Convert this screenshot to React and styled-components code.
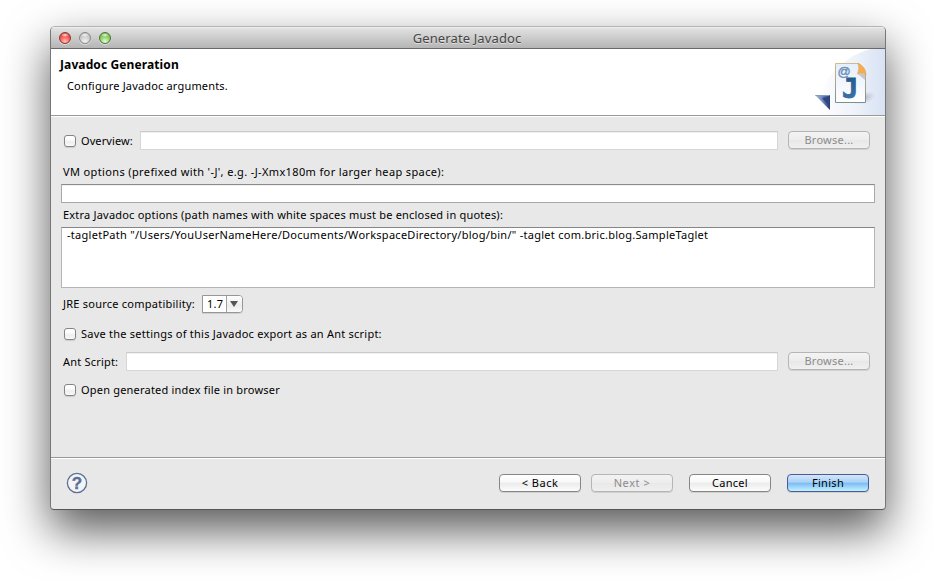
import React from 'react';
import styled, { createGlobalStyle, css } from 'styled-components';

const GlobalStyle = createGlobalStyle`
  * { box-sizing: border-box; }
  html, body { margin: 0; height: 100%; overflow: hidden; background: #fff; }
  body { font-family: "Noto Sans", "Open Sans", sans-serif; font-size: 11px; color: #000; }
`;

const Desktop = styled.div`
  width: 934px;
  height: 581px;
  padding: 26px 0 0 50px;
  overflow: hidden;
`;

const Window = styled.div`
  width: 836px;
  height: 484px;
  display: flex;
  flex-direction: column;
  overflow: hidden;
  border: 1px solid #777;
  border-top-color: #b4b4b4;
  border-bottom-color: #555;
  border-radius: 5px 5px 4px 4px;
  background: #e8e8e8;
  box-shadow: 0 20px 46px rgba(0, 0, 0, 0.66);
`;

const TitleBar = styled.header`
  height: 22px;
  flex: none;
  display: grid;
  grid-template-columns: 100px 1fr 100px;
  align-items: center;
  border-top: 1px solid #ededed;
  border-bottom: 1px solid #696969;
  background: linear-gradient(#e2e2e2, #b5b5b5);
`;

const Lights = styled.div`
  display: flex;
  gap: 8px;
  padding-left: 8px;
`;

const lightTones = {
  red: ['#8b3431', '#b83c38', '#fa5e57', '#ffc0b8'],
  gray: ['#888', '#b5b5b5', '#cfcfcf', '#f2f2f2'],
  green: ['#4d7438', '#64a43d', '#8fd168', '#e3ffd0'],
};

const Light = styled.span`
  width: 12px;
  height: 12px;
  border-radius: 50%;
  border: 1px solid ${p => lightTones[p.$tone][0]};
  background:
    radial-gradient(ellipse 4px 2px at 50% 20%, rgba(255, 255, 255, 0.85), transparent),
    radial-gradient(circle at 50% 85%, ${p => lightTones[p.$tone][3]}, ${p => lightTones[p.$tone][2]} 50%, ${p => lightTones[p.$tone][1]});
  box-shadow: 0 1px 0 rgba(255, 255, 255, 0.5);
`;

const Title = styled.h1`
  margin: 0;
  padding-right: 2px;
  text-align: center;
  font-size: 13px;
  line-height: 20px;
  font-weight: 400;
  letter-spacing: 0.12px;
  color: #454545;
  text-shadow: 0 1px 0 rgba(255, 255, 255, 0.5);
`;

const Banner = styled.section`
  height: 68px;
  flex: none;
  display: flex;
  justify-content: space-between;
  background: #fff;
  border-bottom: 1px solid #fff;
  box-shadow: inset 0 -1px 0 #999;
`;

const BannerText = styled.div`
  padding: 7px 0 0 9px;
`;

const Heading = styled.h2`
  margin: 0;
  font-size: 12px;
  line-height: 18px;
  letter-spacing: 0.11px;
`;

const Description = styled.p`
  margin: 4px 0 0 7px;
  line-height: 16px;
  letter-spacing: 0.17px;
`;

const BannerArt = styled.svg`
  display: block;
  width: 80px;
  height: 66px;
`;

const Form = styled.main`
  height: 340px;
  flex: none;
  padding: 14px 10px 0;
`;

const Row = styled.div`
  display: flex;
  align-items: center;
  height: ${p => p.$h || 19}px;
  margin-top: ${p => p.$top || 0}px;
  padding-left: ${p => p.$inset ?? 2}px;
`;

const Label = styled.span`
  flex: none;
  width: ${p => (p.$w ? `${p.$w}px` : 'auto')};
  line-height: 16px;
  white-space: pre;
  letter-spacing: ${p => p.$track || 0.25}px;
`;

const Check = styled.span`
  flex: none;
  width: 12px;
  height: 12px;
  margin: 0 5px 0 1px;
  border: 1px solid #858585;
  border-radius: 3px;
  background: linear-gradient(#fff 30%, #eee 60%, #fafafa);
  box-shadow: 0 1px 1px rgba(0, 0, 0, 0.12);
`;

const Field = styled.div`
  height: 19px;
  flex: none;
  width: ${p => (p.$w ? `${p.$w}px` : '100%')};
  background: #fff;
  border: 1px solid ${p => (p.$off ? '#d6d6d6' : '#a8a8a8')};
  border-top-color: ${p => (p.$off ? '#cacaca' : '#8c8c8c')};
  box-shadow: inset 0 1px 0 #f0f0f0;
`;

const TextArea = styled.div`
  width: 100%;
  height: 61px;
  padding: 0 5px;
  line-height: 14px;
  white-space: pre;
  letter-spacing: 0.275px;
  background: #fff;
  border: 1px solid #b5b5b5;
  border-top-color: #858585;
`;

const Button = styled.button`
  flex: none;
  align-self: flex-start;
  width: 82px;
  height: 18px;
  padding: 0;
  font: 11px/16px "Noto Sans", sans-serif;
  letter-spacing: ${p => p.$track || 0.4}px;
  text-align: center;
  color: #000;
  border: 1px solid #858585;
  border-radius: 4px;
  background: linear-gradient(#fff, #f8f8f8 45%, #ebebeb 50%, #fcfcfc);
  box-shadow: 0 1px 0 rgba(0, 0, 0, 0.1);
  ${p => p.disabled && css`
    color: #8c8c8c;
    border-color: #b5b5b5;
    background: linear-gradient(#f3f3f3, #ededed 50%, #e8e8e8 52%, #f0f0f0);
  `}
  ${p => p.$primary && css`
    border-color: #4b5a9c;
    background: linear-gradient(#d3e6fa, #a9d1f8 45%, #7dbcf6 52%, #c2f3ff);
  `}
`;

const Combo = styled.div`
  display: flex;
  width: 41px;
  height: 18px;
  border: 1px solid #969696;
  border-radius: 0 4px 4px 0;
  background: #fff;
  overflow: hidden;
  line-height: 16px;
  box-shadow: 0 1px 0 rgba(0, 0, 0, 0.1);
`;

const ComboValue = styled.span`
  width: 24px;
  padding-left: 4px;
  letter-spacing: 0.3px;
  border-right: 1px solid #a0a0a0;
`;

const ComboArrow = styled.span`
  flex: 1;
  display: grid;
  place-items: center;
  padding-right: 2px;
  background: linear-gradient(#fff, #ececec 60%, #fafafa);
  &::after {
    content: '';
    border: 4px solid transparent;
    border-top: 6px solid #555;
    border-bottom: 0;
  }
`;

const Footer = styled.footer`
  flex: 1;
  display: flex;
  align-items: flex-start;
  padding: 15px 16px 0 15px;
  border-top: 1px solid #999;
  box-shadow: inset 0 1px 0 #fff;
`;

const HelpIcon = styled.svg`
  width: 22px;
  height: 22px;
  margin-right: auto;
  margin-top: -1px;
`;

const Actions = styled.div`
  display: flex;
  padding-top: 1px;
`;

const ActionGap = styled.span`
  width: ${p => p.$w}px;
`;

function JavadocArt() {
  return (
    <BannerArt viewBox="0 0 80 66">
      <defs>
        <linearGradient id="glow" x1="0" y1="0" x2="1" y2="0">
          <stop offset="0" stopColor="#fff" />
          <stop offset="0.28" stopColor="#edf2fa" />
          <stop offset="0.5" stopColor="#d5e0f3" />
        </linearGradient>
        <linearGradient id="paper" x1="0" y1="0" x2="0" y2="1">
          <stop offset="0" stopColor="#e6eefa" />
          <stop offset="1" stopColor="#fff" />
        </linearGradient>
        <linearGradient id="edge" x1="0" y1="0" x2="0" y2="1">
          <stop offset="0" stopColor="#d0bb8e" />
          <stop offset="1" stopColor="#7b9190" />
        </linearGradient>
        <linearGradient id="letter" x1="0" y1="0" x2="0" y2="1">
          <stop offset="0" stopColor="#1f5588" />
          <stop offset="1" stopColor="#3f77aa" />
        </linearGradient>
        <radialGradient id="shade">
          <stop offset="0" stopColor="#8f87a0" stopOpacity="0.6" />
          <stop offset="1" stopColor="#b9a9b9" stopOpacity="0" />
        </radialGradient>
        <linearGradient id="fold" x1="0" y1="0" x2="1" y2="0">
          <stop offset="0" stopColor="#a9bbdc" />
          <stop offset="0.5" stopColor="#7088bb" />
          <stop offset="1" stopColor="#24396f" />
        </linearGradient>
      </defs>
      <circle cx="83" cy="70" r="72" fill="url(#glow)" />
      <ellipse cx="59" cy="49" rx="12" ry="6" fill="url(#shade)" transform="rotate(-18 59 49)" />
      <path d="M30.5 14.5 H53 L60.5 25 V53.5 H30.5Z" fill="url(#paper)" stroke="url(#edge)" />
      <path d="M53 14 Q55 19 52.5 25 Q57 22.5 61 26 Q61 18 53 14Z" fill="#f5ad4e" stroke="#d99548" strokeWidth="0.5" />
      <path d="M53 25 Q57 23 60 26 V31Z" fill="#b9b3b5" opacity="0.7" />
      <text x="32.5" y="27" fontFamily="Liberation Sans" fontSize="13" fill="#6990b8" stroke="#6990b8" strokeWidth="0.4">@</text>
      <text x="37" y="48.5" fontFamily="DejaVu Sans Mono" fontWeight="bold" fontSize="27" fill="url(#letter)" stroke="url(#letter)" strokeWidth="0.9">J</text>
      <path d="M10 46 H25 V61Z" fill="url(#fold)" />
      <path d="M17 49 L23 48 V56Z" fill="#2b4585" />
      <path d="M10.5 46.5 H24.5" fill="none" stroke="#8298c5" />
    </BannerArt>
  );
}

export default function App() {
  return (
    <>
      <GlobalStyle />
      <Desktop>
        <Window>
          <TitleBar>
            <Lights>
              <Light $tone="red" />
              <Light $tone="gray" />
              <Light $tone="green" />
            </Lights>
            <Title>Generate Javadoc</Title>
          </TitleBar>
          <Banner>
            <BannerText>
              <Heading>Javadoc Generation</Heading>
              <Description>Configure Javadoc arguments.</Description>
            </BannerText>
            <JavadocArt />
          </Banner>
          <Form>
            <Row>
              <Check />
              <Label $w={59} $track={0.09}>Overview:</Label>
              <Field $w={638} $off />
              <ActionGap $w={10} />
              <Button disabled $track={0.25}>Browse...</Button>
            </Row>
            <Row $top={13} $h={18}>
              <Label $track={0.37}>VM options (prefixed with '-J', e.g. -J-Xmx180m for larger heap space):</Label>
            </Row>
            <Row $top={3} $inset={0}>
              <Field />
            </Row>
            <Row $top={3} $h={18}>
              <Label $track={0.206}>Extra Javadoc options (path names with white spaces must be enclosed in quotes):</Label>
            </Row>
            <Row $top={3} $h={61} $inset={0}>
              <TextArea>{'-tagletPath "/Users/YouUserNameHere/Documents/WorkspaceDirectory/blog/bin/" -taglet com.bric.blog.SampleTaglet'}</TextArea>
            </Row>
            <Row $top={7} $h={18}>
              <Label $w={139} $track={0.24}>JRE source compatibility:</Label>
              <Combo>
                <ComboValue>1.7</ComboValue>
                <ComboArrow />
              </Combo>
            </Row>
            <Row $top={12} $h={18}>
              <Check />
              <Label $track={0.235}>Save the settings of this Javadoc export as an Ant script:</Label>
            </Row>
            <Row $top={9}>
              <Label $w={63} $track={0.2}>Ant Script:</Label>
              <Field $w={652} $off />
              <ActionGap $w={10} />
              <Button disabled $track={0.25}>Browse...</Button>
            </Row>
            <Row $top={10} $h={18}>
              <Check />
              <Label $track={0.2}>Open generated index file in browser</Label>
            </Row>
          </Form>
          <Footer>
            <HelpIcon viewBox="0 0 22 22">
              <circle cx="11" cy="11" r="9.6" fill="#f3f4f6" stroke="#5d6f92" strokeWidth="1.3" />
              <text x="11" y="17" textAnchor="middle" fontFamily="Liberation Sans" fontWeight="bold" fontSize="17" fill="#5b6f96" stroke="#5b6f96" strokeWidth="0.4">?</text>
            </HelpIcon>
            <Actions>
              <Button $track={0.5}>&lt; Back</Button>
              <ActionGap $w={10} />
              <Button disabled $track={0.55}>Next &gt;</Button>
              <ActionGap $w={16} />
              <Button $track={0.3}>Cancel</Button>
              <ActionGap $w={16} />
              <Button $primary $track={0.3}>Finish</Button>
            </Actions>
          </Footer>
        </Window>
      </Desktop>
    </>
  );
}
